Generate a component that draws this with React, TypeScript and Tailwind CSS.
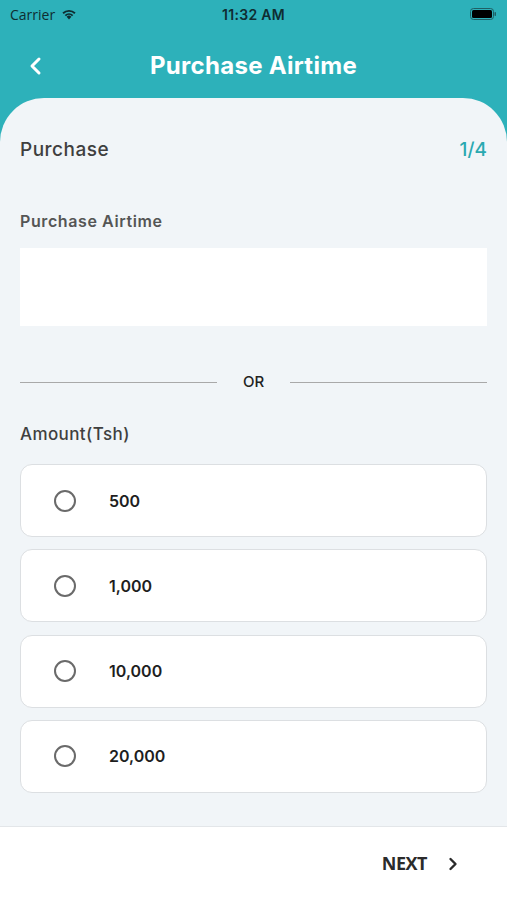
import { useState } from "react";

const amounts = ["500", "1,000", "10,000", "20,000"];

export default function App() {
  const [selected, setSelected] = useState<string | null>(null);

  return (
    <div
      className="w-[507px] h-[900px] flex flex-col bg-[#2db1ba] overflow-hidden"
      style={{ fontFamily: "Inter, 'Noto Sans', sans-serif" }}
    >
      {/* status bar */}
      <div className="h-[28px] flex items-center justify-between px-[10px] text-[14px] text-[#0f2d31] relative">
        <div className="flex items-center gap-[6px]">
          <span style={{ fontFamily: "'Open Sans', sans-serif" }}>Carrier</span>
          <svg width="16" height="12" viewBox="0 0 16 12">
            <path d="M8 11.5 5.6 8.8a3.4 3.4 0 0 1 4.8 0z" fill="#0f2d31" />
            <path d="M3.7 6.9a6.2 6.2 0 0 1 8.6 0l-1.3 1.4a4.3 4.3 0 0 0-6 0z" fill="#0f2d31" />
            <path d="M1.4 4.6a9.5 9.5 0 0 1 13.2 0l-1.3 1.4a7.6 7.6 0 0 0-10.6 0z" fill="#0f2d31" />
          </svg>
        </div>
        <span className="absolute left-1/2 -translate-x-1/2 font-semibold tracking-[0.3px]">11:32 AM</span>
        <svg width="27" height="12" viewBox="0 0 27 12">
          <rect x="0.5" y="0.5" width="23" height="11" rx="3" fill="none" stroke="#1f5f64" />
          <rect x="2" y="2" width="20" height="8" rx="1.5" fill="#000" />
          <rect x="24.5" y="4" width="1.5" height="4" rx="0.7" fill="#1f5f64" />
        </svg>
      </div>

      {/* header */}
      <div className="h-[70px] flex items-center justify-center pt-[6px] px-[26px] relative">
        <svg width="16" height="20" viewBox="0 0 16 20" className="absolute left-[28px] top-[28px]">
          <path d="M11 3 4 10l7 7" fill="none" stroke="#fff" strokeWidth="3" strokeLinecap="round" strokeLinejoin="round" />
        </svg>
        <h1 className="text-white text-[24px] leading-[30px] font-bold tracking-[0.3px]">Purchase Airtime</h1>
      </div>

      {/* panel */}
      <div className="flex-1 bg-[#f1f5f8] rounded-t-[44px] px-[20px] pt-[40px] flex flex-col">
        <div className="flex items-center justify-between h-[24px]">
          <span className="text-[19px] text-[#3f3f3f] font-medium tracking-[0.5px]">Purchase</span>
          <span className="text-[19px] text-[#2aa9b1] font-medium">1/4</span>
        </div>

        <label className="mt-[47px] h-[20px] text-[16px] font-semibold text-[#555] tracking-[0.6px]">
          Purchase Airtime
        </label>
        <input className="mt-[19px] h-[78px] bg-white outline-none px-3 text-[16px]" />

        <div className="mt-[46px] h-[20px] flex items-center">
          <div className="w-[197px] h-px bg-[#a9a9a9]" />
          <span className="flex-1 text-center text-[15px] font-medium text-[#222]">OR</span>
          <div className="w-[197px] h-px bg-[#a9a9a9]" />
        </div>

        <div className="mt-[30px] h-[22px] text-[17px] text-[#3f3f3f] font-medium tracking-[0.4px]">
          Amount(Tsh)
        </div>

        <div className="mt-[20px] flex flex-col gap-[12.3px]">
          {amounts.map((a) => (
            <button
              key={a}
              onClick={() => setSelected(a)}
              className="h-[73px] bg-white border border-[#dcdfe2] rounded-[12px] flex items-center pl-[33px] text-left"
            >
              <span className="w-[22px] h-[22px] rounded-full border-2 border-[#6a6a6a] flex items-center justify-center">
                {selected === a && <span className="w-[10px] h-[10px] rounded-full bg-[#2db1ba]" />}
              </span>
              <span className="ml-[33px] text-[16px] font-semibold text-[#1e1e1e]">{a}</span>
            </button>
          ))}
        </div>
      </div>

      {/* footer */}
      <div className="h-[74px] bg-white border-t border-[#e3e6e9] flex items-center justify-end pr-[48px]">
        <span
          className="text-[18px] font-bold text-[#2b2b2b] tracking-[-0.5px]"
          style={{ fontFamily: "'Open Sans', sans-serif" }}
        >
          NEXT
        </span>
        <svg width="12" height="16" viewBox="0 0 12 16" className="ml-[20px]">
          <path d="M3.5 3 8.5 8l-5 5" fill="none" stroke="#2b2b2b" strokeWidth="2.4" strokeLinecap="round" strokeLinejoin="round" />
        </svg>
      </div>
    </div>
  );
}
